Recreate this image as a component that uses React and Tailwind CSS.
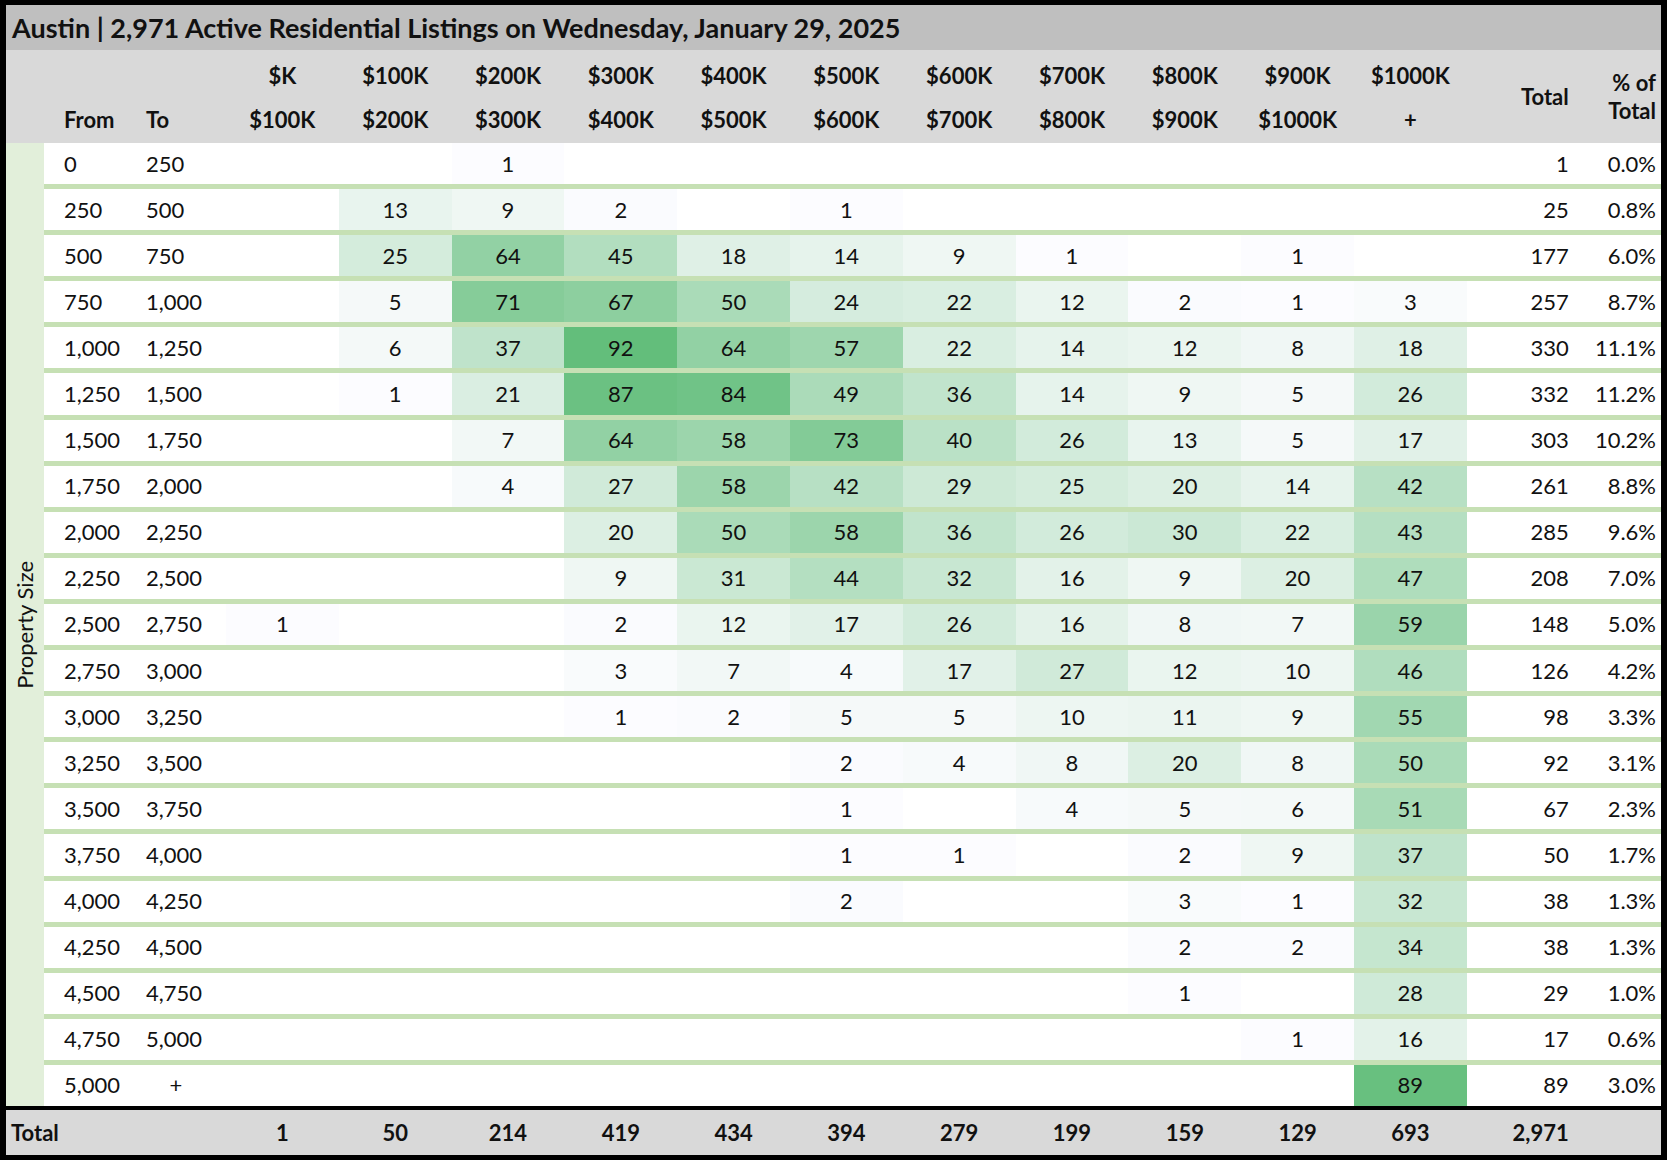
import React from 'react';

const priceFrom = ['$K', '$100K', '$200K', '$300K', '$400K', '$500K', '$600K', '$700K', '$800K', '$900K', '$1000K'];
const priceTo = ['$100K', '$200K', '$300K', '$400K', '$500K', '$600K', '$700K', '$800K', '$900K', '$1000K', '+'];

// size band rows: from, to, counts per price bucket, total, share
const rows = [
  ['0', '250', [0, 0, 1, 0, 0, 0, 0, 0, 0, 0, 0], '1', '0.0%'],
  ['250', '500', [0, 13, 9, 2, 0, 1, 0, 0, 0, 0, 0], '25', '0.8%'],
  ['500', '750', [0, 25, 64, 45, 18, 14, 9, 1, 0, 1, 0], '177', '6.0%'],
  ['750', '1,000', [0, 5, 71, 67, 50, 24, 22, 12, 2, 1, 3], '257', '8.7%'],
  ['1,000', '1,250', [0, 6, 37, 92, 64, 57, 22, 14, 12, 8, 18], '330', '11.1%'],
  ['1,250', '1,500', [0, 1, 21, 87, 84, 49, 36, 14, 9, 5, 26], '332', '11.2%'],
  ['1,500', '1,750', [0, 0, 7, 64, 58, 73, 40, 26, 13, 5, 17], '303', '10.2%'],
  ['1,750', '2,000', [0, 0, 4, 27, 58, 42, 29, 25, 20, 14, 42], '261', '8.8%'],
  ['2,000', '2,250', [0, 0, 0, 20, 50, 58, 36, 26, 30, 22, 43], '285', '9.6%'],
  ['2,250', '2,500', [0, 0, 0, 9, 31, 44, 32, 16, 9, 20, 47], '208', '7.0%'],
  ['2,500', '2,750', [1, 0, 0, 2, 12, 17, 26, 16, 8, 7, 59], '148', '5.0%'],
  ['2,750', '3,000', [0, 0, 0, 3, 7, 4, 17, 27, 12, 10, 46], '126', '4.2%'],
  ['3,000', '3,250', [0, 0, 0, 1, 2, 5, 5, 10, 11, 9, 55], '98', '3.3%'],
  ['3,250', '3,500', [0, 0, 0, 0, 0, 2, 4, 8, 20, 8, 50], '92', '3.1%'],
  ['3,500', '3,750', [0, 0, 0, 0, 0, 1, 0, 4, 5, 6, 51], '67', '2.3%'],
  ['3,750', '4,000', [0, 0, 0, 0, 0, 1, 1, 0, 2, 9, 37], '50', '1.7%'],
  ['4,000', '4,250', [0, 0, 0, 0, 0, 2, 0, 0, 3, 1, 32], '38', '1.3%'],
  ['4,250', '4,500', [0, 0, 0, 0, 0, 0, 0, 0, 2, 2, 34], '38', '1.3%'],
  ['4,500', '4,750', [0, 0, 0, 0, 0, 0, 0, 0, 1, 0, 28], '29', '1.0%'],
  ['4,750', '5,000', [0, 0, 0, 0, 0, 0, 0, 0, 0, 1, 16], '17', '0.6%'],
  ['5,000', '+', [0, 0, 0, 0, 0, 0, 0, 0, 0, 0, 89], '89', '3.0%'],
];

const totals = ['1', '50', '214', '419', '434', '394', '279', '199', '159', '129', '693'];

// excel style white -> green scale, min 1 max 92
function heat(v) {
  const t = (v - 1) / 91;
  const r = Math.round(252 + (99 - 252) * t);
  const g = Math.round(252 + (190 - 252) * t);
  const b = Math.round(255 + (123 - 255) * t);
  return `rgb(${r},${g},${b})`;
}

function DataRow({ row }) {
  const [from, to, counts, total, pct] = row;
  return (
    <div className="flex-1 grid grid-cols-[82px_100px_repeat(11,112.8px)_113px_1fr] bg-white">
      <div className="flex items-center pl-5">{from}</div>
      <div className={`flex items-center ${to === '+' ? 'justify-center' : 'pl-5'}`}>{to}</div>
      {counts.map((v, i) => (
        <div
          key={i}
          className="flex items-center justify-center"
          style={v ? { backgroundColor: heat(v) } : undefined}
        >
          {v ? v : ''}
        </div>
      ))}
      <div className="flex items-center justify-end pr-[11px]">{total}</div>
      <div className="flex items-center justify-end pr-[5px]">{pct}</div>
    </div>
  );
}

export default function App() {
  return (
    <div className="w-[1667px] h-[1160px] bg-black pt-[5px] pb-[5px] pl-[6px] pr-[6px] flex flex-col text-[#111] text-[22px] leading-none [font-family:Lato,sans-serif]">
      <div className="h-[45px] bg-[#bfbfbf] flex items-center pl-[6px] font-bold text-[27px]">
        Austin | 2,971 Active Residential Listings on Wednesday, January 29, 2025
      </div>

      <div className="h-[93px] bg-[#d9d9d9] grid grid-cols-[38px_82px_100px_repeat(11,112.8px)_113px_1fr] grid-rows-[48px_45px] font-bold">
        <div className="row-span-2" />
        <div />
        <div />
        {priceFrom.map((p) => (
          <div key={p} className="flex items-center justify-center pt-[4px]">{p}</div>
        ))}
        <div className="row-span-2 flex items-center justify-end pr-[11px]">Total</div>
        <div className="row-span-2 flex flex-col items-end justify-center pr-[5px] gap-[6px]">
          <span>% of</span>
          <span>Total</span>
        </div>
        <div className="flex items-center pl-5 pb-[2px]">From</div>
        <div className="flex items-center pl-5 pb-[2px]">To</div>
        {priceTo.map((p) => (
          <div key={p} className="flex items-center justify-center pb-[2px]">{p}</div>
        ))}
      </div>

      <div className="h-[963px] flex">
        <div className="w-[38px] bg-[#e2efda] flex items-center justify-center">
          <span className="[writing-mode:vertical-rl] rotate-180">Property Size</span>
        </div>
        <div className="flex-1 flex flex-col">
          {rows.map((r, i) => (
            <React.Fragment key={r[0]}>
              {i > 0 && <div className="h-[5px] shrink-0 bg-[#c6e0b4]" />}
              <DataRow row={r} />
            </React.Fragment>
          ))}
        </div>
      </div>

      <div className="h-[4px] bg-black" />

      <div className="h-[45px] bg-[#d9d9d9] grid grid-cols-[120px_100px_repeat(11,112.8px)_113px_1fr] font-bold">
        <div className="flex items-center pl-[5px]">Total</div>
        <div />
        {totals.map((t, i) => (
          <div key={i} className="flex items-center justify-center">{t}</div>
        ))}
        <div className="flex items-center justify-end pr-[11px]">2,971</div>
        <div />
      </div>
    </div>
  );
}
